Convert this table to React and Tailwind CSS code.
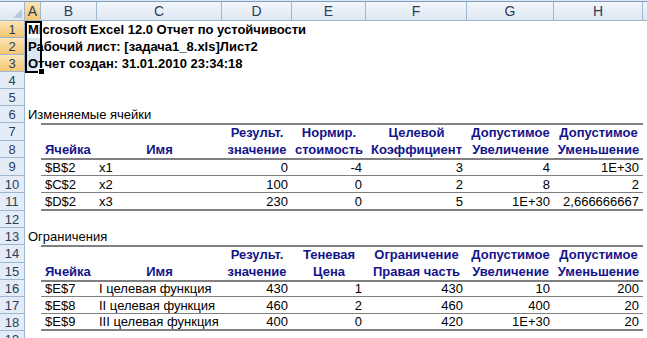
import React from "react";

// widths of columns B..H (A is 16px, drawn separately)
const COLS = ["w-[56px]", "w-[125px]", "w-[70px]", "w-[74px]", "w-[101px]", "w-[87px]", "w-[89px]"];
const LETTERS = ["B", "C", "D", "E", "F", "G", "H"];

const head1 = ["", "", "Результ.", "Нормир.", "Целевой", "Допустимое", "Допустимое"];
const head2 = ["Ячейка", "Имя", "значение", "стоимость", "Коэффициент", "Увеличение", "Уменьшение"];
const rows1 = [
  ["$B$2", "x1", "0", "-4", "3", "4", "1E+30"],
  ["$C$2", "x2", "100", "0", "2", "8", "2"],
  ["$D$2", "x3", "230", "0", "5", "1E+30", "2,666666667"],
];

const head3 = ["", "", "Результ.", "Теневая", "Ограничение", "Допустимое", "Допустимое"];
const head4 = ["Ячейка", "Имя", "значение", "Цена", "Правая часть", "Увеличение", "Уменьшение"];
const rows2 = [
  ["$E$7", "I целевая функция", "430", "1", "430", "10", "200"],
  ["$E$8", "II целевая функция", "460", "2", "460", "400", "20"],
  ["$E$9", "III целевая функция", "400", "0", "420", "1E+30", "20"],
];

function Row({ n, h, sel, a, aClass = "", children }) {
  return (
    <div className={`flex ${h}`}>
      <div
        className={`w-[25px] shrink-0 flex items-center justify-center border-r border-b border-[#9eb6ce] text-[13px] text-[#2c3e55] ${
          sel ? "bg-linear-to-b from-[#fce5b6] to-[#f5c670]" : "bg-[#e4ecf7]"
        }`}
      >
        {n}
      </div>
      <div className={`w-[16px] shrink-0 flex items-end pb-px pl-[3px] whitespace-nowrap ${aClass}`}>{a}</div>
      {children}
    </div>
  );
}

function TableRow({ cells, line, head }) {
  return cells.map((txt, i) => {
    let align = "justify-end pr-[4px]";
    if (i === 0) align = "justify-start pl-[4px]";
    else if (i === 1) align = head ? "justify-center" : "justify-start pl-[2px]";
    else if (head) align = "justify-center";
    return (
      <div
        key={i}
        className={`${COLS[i]} shrink-0 flex items-end whitespace-nowrap border-[#808080] ${align} ${line} ${
          head ? "font-bold text-[#14148a]" : "text-black"
        }`}
      >
        {txt}
      </div>
    );
  });
}

export default function App() {
  return (
    <div className="relative w-[647px] h-[338px] overflow-hidden bg-white font-['Liberation_Sans',Arial,sans-serif] text-[13px] leading-[15px]">
      {/* column headers */}
      <div className="pt-px bg-[#dde7f3] text-[14px]">
        <div className="flex h-[20px] border-t border-[#7f9cc2]">
          <div className="relative w-[25px] shrink-0 border-r border-b border-[#9eb6ce] bg-linear-to-b from-[#f2f6fb] to-[#dfe7f1]">
            <svg className="absolute right-[2px] bottom-[2px]" width="9" height="9" viewBox="0 0 9 9">
              <polygon points="9,0 9,9 0,9" fill="#b5c8dd" />
            </svg>
          </div>
          <div className="w-[16px] shrink-0 flex items-center justify-center border-r border-b border-[#9eb6ce] bg-linear-to-b from-[#fce5b6] to-[#f5c670] text-[#2c3e55]">
            A
          </div>
          {LETTERS.map((l, i) => (
            <div
              key={l}
              className={`${COLS[i]} shrink-0 flex items-center justify-center border-r border-b border-[#9eb6ce] bg-linear-to-b from-[#f2f6fb] to-[#dfe7f1] text-[#2c3e55]`}
            >
              {l}
            </div>
          ))}
          <div className="flex-1 border-b border-[#9eb6ce] bg-linear-to-b from-[#f2f6fb] to-[#dfe7f1]" />
        </div>
      </div>

      <Row n="1" h="h-[17px]" sel a="Microsoft Excel 12.0 Отчет по устойчивости" aClass="font-bold" />
      <Row n="2" h="h-[17px]" sel a="Рабочий лист: [задача1_8.xls]Лист2" aClass="font-bold bg-[#dce5f2]" />
      <Row n="3" h="h-[17px]" sel a="Отчет создан: 31.01.2010 23:34:18" aClass="font-bold bg-[#dce5f2]" />
      <Row n="4" h="h-[17px]" />
      <Row n="5" h="h-[17px]" />
      <Row n="6" h="h-[17px]" a="Изменяемые ячейки" />
      <Row n="7" h="h-[18px]">
        <TableRow cells={head1} head line="border-t-2 pb-px" />
      </Row>
      <Row n="8" h="h-[17px]">
        <TableRow cells={head2} head line="pb-px" />
      </Row>
      <Row n="9" h="h-[18px]">
        <TableRow cells={rows1[0]} line="border-t-2 border-b" />
      </Row>
      <Row n="10" h="h-[17px]">
        <TableRow cells={rows1[1]} line="border-b" />
      </Row>
      <Row n="11" h="h-[18px]">
        <TableRow cells={rows1[2]} line="border-b-2" />
      </Row>
      <Row n="12" h="h-[17px]" />
      <Row n="13" h="h-[17px]" a="Ограничения" />
      <Row n="14" h="h-[18px]">
        <TableRow cells={head3} head line="border-t-2 pb-px" />
      </Row>
      <Row n="15" h="h-[17px]">
        <TableRow cells={head4} head line="pb-px" />
      </Row>
      <Row n="16" h="h-[17px]">
        <TableRow cells={rows2[0]} line="border-t-2 border-b" />
      </Row>
      <Row n="17" h="h-[17px]">
        <TableRow cells={rows2[1]} line="border-b" />
      </Row>
      <Row n="18" h="h-[17px]">
        <TableRow cells={rows2[2]} line="border-b-2" />
      </Row>
      <Row n="19" h="h-[17px]" />

      {/* selection A1:A3 */}
      <div className="absolute left-[25px] top-[21px] w-[17px] h-[52px] border-2 border-black pointer-events-none" />
      <div className="absolute left-[38px] top-[68px] w-[7px] h-[7px] bg-black border border-white" />
    </div>
  );
}
